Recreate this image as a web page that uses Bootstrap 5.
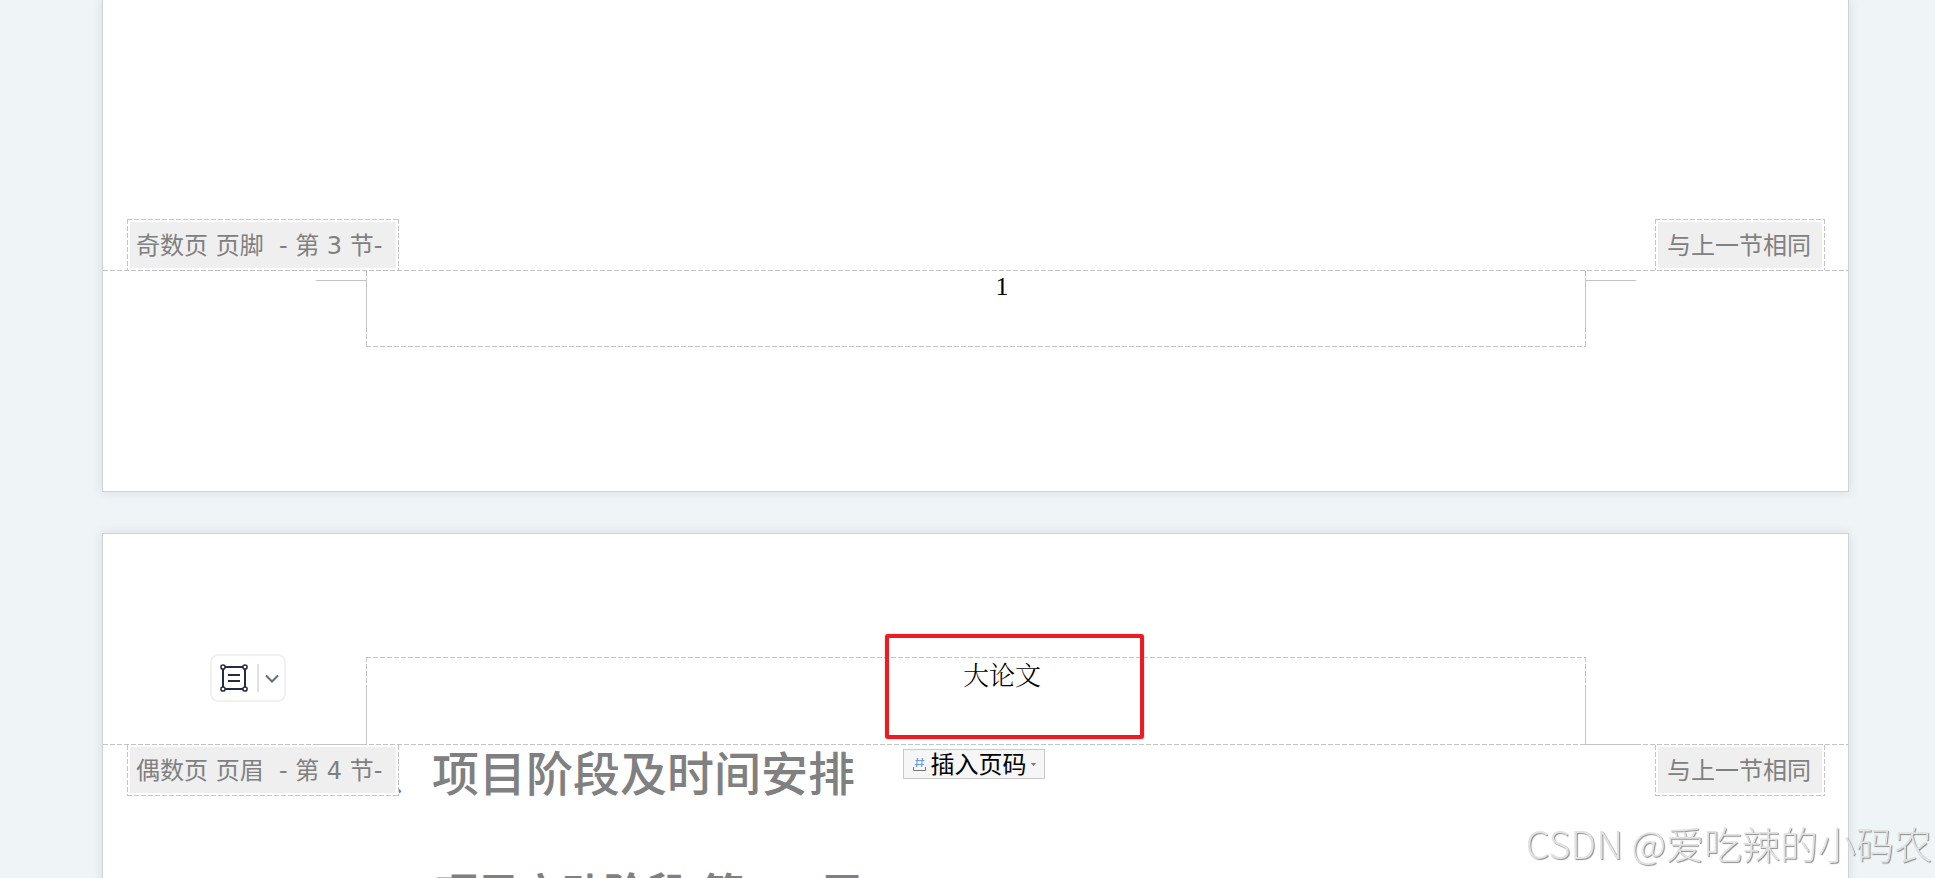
<!DOCTYPE html>
<html lang="zh-CN">
<head>
<meta charset="utf-8">
<meta name="viewport" content="width=device-width, initial-scale=1">
<title>大论文</title>
<link href="https://cdn.jsdelivr.net/npm/bootstrap@5.3.0/dist/css/bootstrap.min.css" rel="stylesheet">
<style>
:root { --rule: #c4c4c4; --dash-h: repeating-linear-gradient(90deg, var(--rule) 0 5px, transparent 5px 7px); --dash-v: repeating-linear-gradient(180deg, var(--rule) 0 5px, transparent 5px 7px); }
body { background: #eff4f7; font-family: "Noto Sans CJK SC", sans-serif; color: #000; }
.workspace { padding: 0 86px 0 102px; gap: 41px; }
.sheet { background: #fff; border: 1px solid #ced3d8; box-shadow: 0 0 10px rgba(60, 75, 90, .14); }
.sheet-odd { border-top: 0; padding-bottom: 144px; }
.sheet-even { padding-top: 123px; min-height: 400px; }
.blank-body { height: 219px; }

/* dashed frames; the side that meets the full-width rule stays open */
.frame { background-image: var(--dash-h), var(--dash-v), var(--dash-v); background-repeat: no-repeat; background-size: 100% 1px, 1px 100%, 1px 100%; }
.open-bottom { background-position: 0 0, 0 0, 100% 0; }
.open-top { background-position: 0 100%, 0 0, 100% 0; }
.section-tag { background-color: #fff; padding: 3px; height: 51px; }
.section-tag > span { display: block; height: 46px; background: #efefef; color: #808080; font-family: "DejaVu Sans", "Noto Sans CJK SC", sans-serif; font-size: 24px; line-height: 48px; white-space: pre; }
.tag-kind > span { width: 266px; padding-left: 6px; }
.tag-link > span { width: 164px; padding-left: 9px; }
.tag-row { padding: 0 23px 0 24px; }
.open-top.section-tag { padding-top: 2px; }
.rule-line { height: 1px; background: var(--dash-h); }

.margin-box { margin: 0 262px 0 263px; text-indent: 52px; font-size: 26px; }
.footer-box { height: 76px; line-height: 32px; font-family: "Liberation Serif", serif; }
.header-box { height: 87px; line-height: 40px; font-family: "Liberation Serif", "Noto Serif CJK SC", "Noto Sans CJK SC", serif; font-weight: 300; }
.crop-mark { width: 51px; border: 0 solid var(--rule); }
.crop-left { right: 100%; margin-right: -1px; border-right-width: 1px; }
.crop-right { left: 100%; margin-left: -1px; border-left-width: 1px; }
.crop-foot { top: 9px; height: 52px; border-top-width: 1px; }
.crop-head { bottom: -1px; height: 55px; border-bottom-width: 1px; }

.callout { left: 50%; top: -23px; width: 259px; height: 105px; margin-left: -91px; border: 4px solid #ed1c24; border-radius: 3px; box-shadow: 0 0 1px #ed1c24; }
.insert-btn { left: 50%; top: 92px; margin-left: -73px; width: 142px; height: 30px; padding: 0 7px 0 9px; background: #f6f6f6; border: 1px solid #c8c8c8; font-size: 24px; line-height: 26px; }
.insert-btn span { margin: 0 4px 2px 5px; }
.layout-tool { left: 107px; top: -3px; height: 48px; border: 2px solid #f0f0f0; border-radius: 8px; background: #fff; }
.layout-tool button { background: none; border: 0; padding: 0; }
.tool-main { width: 45px; padding-right: 1px !important; }
.tool-more { width: 25px; }
.tool-sep { width: 2px; height: 28px; background: #e0e0e0; }

.doc-title, .doc-subtitle { color: #808080; font-weight: 500; white-space: pre; margin: 0; }
.doc-title { font-size: 47px; line-height: 52px; padding-left: 282px; }
.doc-subtitle { font-family: "Liberation Serif", "Noto Sans CJK SC", serif; font-size: 42px; line-height: 60px; padding: 68px 0 0 301px; font-weight: 700; }
.watermark { right: 3px; bottom: 0; font-size: 38px; line-height: 70px; font-weight: 300; color: #e2e2e2; text-shadow: 1px 1px 1px #8c8c8c; }
</style>
</head>
<body>
<main class="workspace d-flex flex-column vh-100 overflow-hidden">
  <section class="sheet sheet-odd flex-shrink-0">
    <div class="blank-body"></div>
    <div class="tag-row d-flex justify-content-between">
      <div class="section-tag tag-kind frame open-bottom"><span>奇数页 页脚  - 第 3 节-</span></div>
      <div class="section-tag tag-link frame open-bottom"><span>与上一节相同</span></div>
    </div>
    <div class="rule-line"></div>
    <footer class="margin-box footer-box frame open-top position-relative text-center">1
      <i class="crop-mark crop-left crop-foot position-absolute"></i>
      <i class="crop-mark crop-right crop-foot position-absolute"></i>
    </footer>
  </section>

  <section class="sheet sheet-even flex-shrink-0">
    <div class="position-relative">
      <header class="margin-box header-box frame open-bottom position-relative text-center">大论文
        <i class="crop-mark crop-left crop-head position-absolute"></i>
        <i class="crop-mark crop-right crop-head position-absolute"></i>
      </header>
      <div class="rule-line"></div>
      <div class="layout-tool position-absolute d-flex align-items-center">
        <button class="tool-main d-flex justify-content-center" type="button" aria-label="版式">
          <svg width="28" height="28" viewBox="0 0 28 28" fill="none" stroke="#252c41" stroke-width="2"><path d="M5 3h18M5 25h18M3 5v18M25 5v18M8 11h12M8 17h12"/><g stroke-width="1.5"><circle cx="3" cy="3" r="2.1"/><circle cx="25" cy="3" r="2.1"/><circle cx="3" cy="25" r="2.1"/><circle cx="25" cy="25" r="2.1"/></g></svg>
        </button>
        <div class="tool-sep"></div>
        <button class="tool-more d-flex justify-content-center" type="button" aria-label="更多">
          <svg width="14" height="9" viewBox="0 0 14 9" fill="none" stroke="#686c7a" stroke-width="2"><path d="m1 1.5 6 6 6-6"/></svg>
        </button>
      </div>
      <div class="callout position-absolute"></div>
      <button class="insert-btn position-absolute d-flex align-items-center" type="button">
        <svg class="flex-shrink-0" width="13" height="13" viewBox="0 0 13 13" fill="none"><path d="M4.5 0 3.5 9M9.5 0 8.5 9M2.5 2.5h9M2 6.5h9" stroke="#6d9bea" stroke-width="1.2"/><path d="M.5 9v3.5h12V9" stroke="#777"/></svg>
        <span class="text-nowrap">插入页码</span>
        <svg class="flex-shrink-0" width="5" height="3" viewBox="0 0 5 3"><path d="M0 0h5L2.500 3z" fill="#6b7490"/></svg>
      </button>
      <div class="tag-row position-absolute top-100 start-0 w-100 d-flex justify-content-between">
        <div class="section-tag tag-kind frame open-top"><span>偶数页 页眉  - 第 4 节-</span></div>
        <div class="section-tag tag-link frame open-top"><span>与上一节相同</span></div>
      </div>
    </div>
    <h1 class="doc-title">、项目阶段及时间安排</h1>
    <h2 class="doc-subtitle">1 项目启动阶段(第 1-2 周)</h2>
  </section>
</main>
<div class="watermark position-fixed text-nowrap">CSDN @爱吃辣的小码农</div>
</body>
</html>
